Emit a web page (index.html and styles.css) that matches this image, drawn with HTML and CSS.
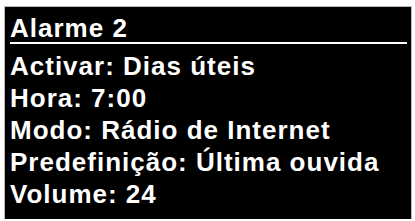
FILE: index.html
```html
<!DOCTYPE html>
<html lang="pt">
<head>
    <meta charset="UTF-8">
    <meta name="viewport" content="width=device-width, initial-scale=1.0">
    <title>Alarme 2</title>
    <link rel="stylesheet" href="styles.css">
</head>
<body>
    <div class="screen">
        <h1 class="title">Alarme 2</h1>
        <ul class="settings">
            <li>Activar: Dias úteis</li>
            <li>Hora: 7:00</li>
            <li>Modo: Rádio de Internet</li>
            <li>Predefinição: Última ouvida</li>
            <li>Volume: 24</li>
        </ul>
    </div>
</body>
</html>
```

FILE: styles.css
```css
body {
    margin: 0;
    padding: 0;
    background-color: #fff;
    font-family: "Liberation Sans", Arial, sans-serif;
}

.screen {
    box-sizing: border-box;
    height: 212px;
    margin: 7px 4px 0 5px;
    padding: 7px 4px 0 5px;
    background-color: #000;
    color: #fff;
    box-shadow: 0 0 0 1px #bbb;
}

.title {
    margin: 0;
    font-size: 26px;
    font-weight: bold;
    line-height: 28px;
    letter-spacing: 1px;
    border-bottom: 2px solid #fff;
}

.settings {
    list-style: none;
    margin: 6px 0 0 0;
    padding: 0;
    font-size: 26px;
    font-weight: bold;
    line-height: 32px;
    letter-spacing: 1px;
}
```
